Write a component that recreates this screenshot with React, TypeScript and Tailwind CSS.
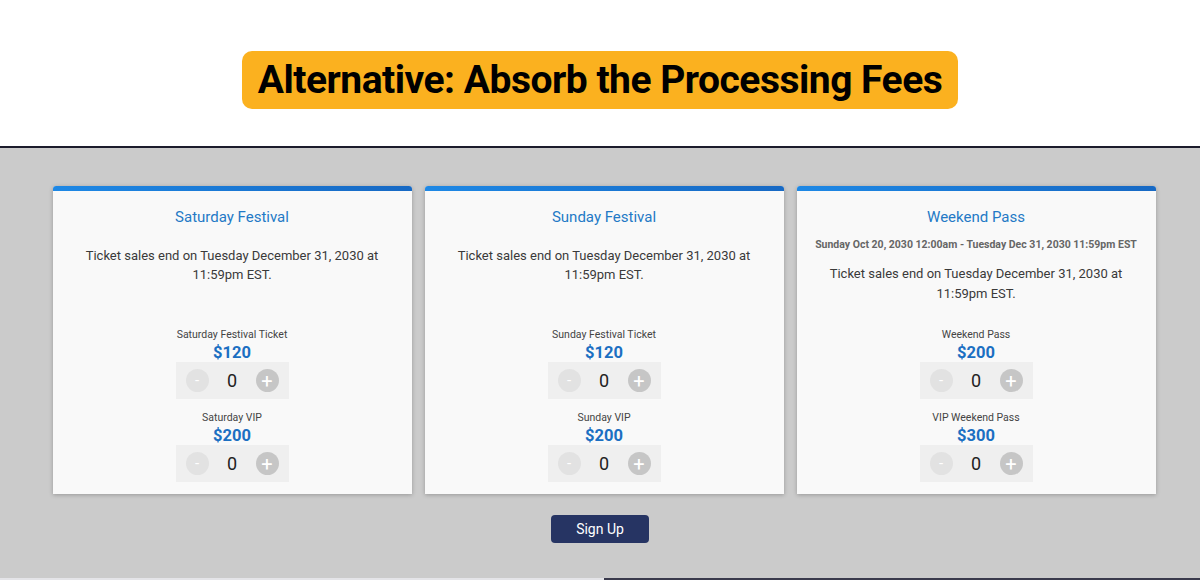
import React from "react";

type Ticket = { label: string; price: string };
type Card = { title: string; dates?: string; tickets: Ticket[] };

const cards: Card[] = [
  {
    title: "Saturday Festival",
    tickets: [
      { label: "Saturday Festival Ticket", price: "$120" },
      { label: "Saturday VIP", price: "$200" },
    ],
  },
  {
    title: "Sunday Festival",
    tickets: [
      { label: "Sunday Festival Ticket", price: "$120" },
      { label: "Sunday VIP", price: "$200" },
    ],
  },
  {
    title: "Weekend Pass",
    dates: "Sunday Oct 20, 2030 12:00am - Tuesday Dec 31, 2030 11:59pm EST",
    tickets: [
      { label: "Weekend Pass", price: "$200" },
      { label: "VIP Weekend Pass", price: "$300" },
    ],
  },
];

function Counter() {
  return (
    <div className="flex h-[37px] w-[113px] items-center justify-between bg-[#efefef] px-[10px]">
      <div className="flex h-[23px] w-[23px] items-center justify-center rounded-full bg-[#e2e2e2] text-[15px] leading-none text-white">
        -
      </div>
      <div className="text-[18px] leading-none text-[#222]">0</div>
      <div className="flex h-[23px] w-[23px] items-center justify-center rounded-full bg-[#c6c6c6] text-[20px] leading-none text-white">
        +
      </div>
    </div>
  );
}

function TicketCard({ card }: { card: Card }) {
  return (
    <div className="flex h-[308px] w-[359px] flex-col overflow-hidden rounded-t-[3px] bg-[#f9f9f9] shadow-[0_1px_4px_rgba(0,0,0,0.25)]">
      <div className="h-[5px] bg-gradient-to-r from-[#1e88e5] to-[#1769c4]" />
      <div className="mt-[16px] text-center text-[15px] leading-[20px] text-[#2479c6]">{card.title}</div>
      {card.dates ? (
        <>
          <div className="mt-[11px] text-center text-[10.5px] font-bold leading-[14px] text-[#666]">{card.dates}</div>
          <div className="mx-auto mt-[12px] w-[310px] text-center text-[13px] leading-[20px] text-[#3a3a3a]">
            Ticket sales end on Tuesday December 31, 2030 at 11:59pm EST.
          </div>
        </>
      ) : (
        <div className="mx-auto mt-[19px] w-[310px] text-center text-[13px] leading-[19px] text-[#3a3a3a]">
          Ticket sales end on Tuesday December 31, 2030 at 11:59pm EST.
        </div>
      )}
      <div className="mt-auto mb-[12px] flex flex-col items-center gap-[12px]">
        {card.tickets.map((t) => (
          <div key={t.label} className="flex flex-col items-center">
            <div className="text-[10.5px] leading-[13px] text-[#444]">{t.label}</div>
            <div className="mt-[3px] text-[16.5px] font-bold leading-[18px] text-[#1b6fc2]">{t.price}</div>
            <Counter />
          </div>
        ))}
      </div>
    </div>
  );
}

export default function App() {
  return (
    <div className="flex h-[580px] w-[1200px] flex-col overflow-hidden bg-white" style={{ fontFamily: "Roboto, 'Liberation Sans', sans-serif" }}>
      <div className="flex h-[146px] items-start justify-center pt-[51px]">
        <div className="flex h-[58px] w-[716px] items-center justify-center rounded-[10px] bg-[#fbb11f]">
          <span className="text-[39px] font-bold leading-none tracking-[-0.5px] text-black">
            Alternative: Absorb the Processing Fees
          </span>
        </div>
      </div>
      <div className="h-[2px] bg-[#1c1c2c]" />
      <div className="flex flex-1 flex-col items-center bg-[#cbcbcb] pl-[8px] pt-[38px]">
        <div className="flex gap-[13px]">
          {cards.map((c) => (
            <TicketCard key={c.title} card={c} />
          ))}
        </div>
        <button className="-ml-[8px] mt-[21px] flex h-[28px] w-[98px] items-center justify-center rounded-[4px] bg-[#263463] text-[14px] text-white">
          Sign Up
        </button>
      </div>
      <div className="flex h-[2px]">
        <div className="w-[604px] bg-[#e4e4e8]" />
        <div className="flex-1 bg-[#3a3a4c]" />
      </div>
    </div>
  );
}
